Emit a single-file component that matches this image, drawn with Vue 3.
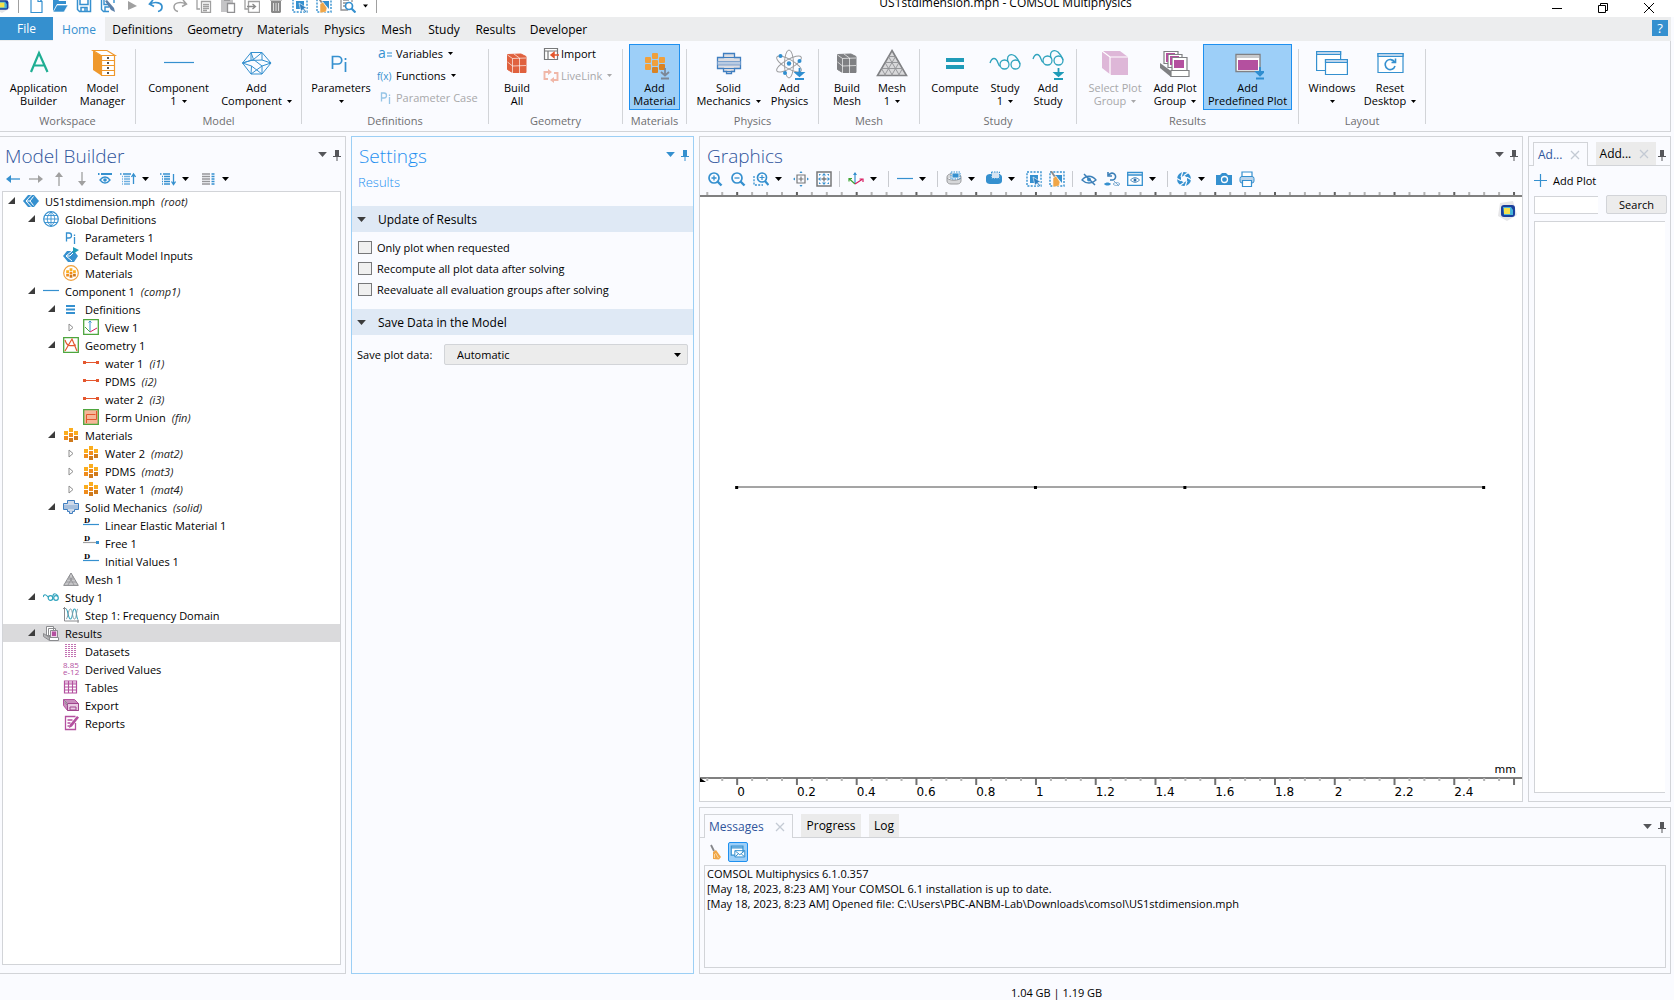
<script setup>
import { ref } from 'vue'

const quickIcons = ['new', 'open', 'save', 'saveas', 'play', 'undo', 'redo', 'copy', 'paste', 'duplicate', 'trash', 'select', 'clear', 'preview']

const menus = [
  { label: 'Home', w: 52, active: true },
  { label: 'Definitions', w: 75 },
  { label: 'Geometry', w: 70 },
  { label: 'Materials', w: 66 },
  { label: 'Physics', w: 57 },
  { label: 'Mesh', w: 47 },
  { label: 'Study', w: 48 },
  { label: 'Results', w: 55 },
  { label: 'Developer', w: 71 },
]

const ribbon = [
  { label: 'Workspace', w: 135, items: [
    { icon: 'appbuilder', lines: ['Application', 'Builder'], w: 70 },
    { icon: 'manager', lines: ['Model', 'Manager'], w: 58 },
  ] },
  { label: 'Model', w: 165, items: [
    { icon: 'component', lines: ['Component', '1'], menu: true, w: 76 },
    { icon: 'addcomp', lines: ['Add', 'Component'], menu: true, w: 80 },
  ] },
  { label: 'Definitions', w: 186, items: [
    { icon: 'params', lines: ['Parameters', ''], menu: true, w: 68 },
  ], listW: 108, list: [
    { icon: 'variables', label: 'Variables', menu: true },
    { icon: 'functions', label: 'Functions', menu: true },
    { icon: 'paramcase', label: 'Parameter Case', disabled: true },
  ] },
  { label: 'Geometry', w: 133, items: [
    { icon: 'buildall', lines: ['Build', 'All'], w: 46 },
  ], listW: 77, list: [
    { icon: 'import', label: 'Import' },
    { icon: 'livelink', label: 'LiveLink', menu: true, disabled: true },
  ] },
  { label: 'Materials', w: 63, items: [
    { icon: 'addmat', lines: ['Add', 'Material'], w: 51, active: true },
  ] },
  { label: 'Physics', w: 131, items: [
    { icon: 'solid', lines: ['Solid', 'Mechanics'], menu: true, w: 74 },
    { icon: 'addphys', lines: ['Add', 'Physics'], w: 48 },
  ] },
  { label: 'Mesh', w: 100, items: [
    { icon: 'buildmesh', lines: ['Build', 'Mesh'], w: 46 },
    { icon: 'mesh', lines: ['Mesh', '1'], menu: true, w: 44 },
  ] },
  { label: 'Study', w: 156, items: [
    { icon: 'compute', lines: ['Compute', ''], w: 58 },
    { icon: 'study', lines: ['Study', '1'], menu: true, w: 42 },
    { icon: 'addstudy', lines: ['Add', 'Study'], w: 44 },
  ] },
  { label: 'Results', w: 221, items: [
    { icon: 'selplot', lines: ['Select Plot', 'Group'], menu: true, disabled: true, w: 64 },
    { icon: 'addplot', lines: ['Add Plot', 'Group'], menu: true, w: 56 },
    { icon: 'predef', lines: ['Add', 'Predefined Plot'], w: 89, active: true },
  ] },
  { label: 'Layout', w: 126, items: [
    { icon: 'windows', lines: ['Windows', ''], menu: true, w: 56 },
    { icon: 'reset', lines: ['Reset', 'Desktop'], menu: true, w: 60 },
  ] },
]

// Lettering that belongs to an icon
const serif = 'DejaVu Serif, serif'
const glyphs = {
  variables: [{ t: 'a', x: 0, y: 13, size: 14, color: '#3590cf' }],
  functions: [{ t: 'f(x)', x: -1, y: 13, size: 10, color: '#3590cf' }],
  dline: [{ t: 'D', x: 1, y: 6, size: 7, color: '#000', font: serif, bold: true }],
  dpoint: [{ t: 'D', x: 1, y: 6, size: 7, color: '#000', font: serif, bold: true }],
  derived: [
    { t: '8.85', x: 0, y: 7, size: 8, color: '#b4509f' },
    { t: 'e-12', x: 0, y: 14, size: 8, color: '#b4509f' },
  ],
}

const builderTools = ['left', 'right', 'up', 'down', 'show', 'listup', 'v', 'listdown', 'v', 'columns', 'v']
const graphicsTools = [
  'zoomin', 'zoomout', 'zoombox', 'v', 'center', 'extents', '|', 'axes', 'v', '|', 'line', 'v', '|',
  'cylgrey', 'v', 'cylblue', 'v', 'select', 'clear', '|', 'hide', 'resethide', 'viewhide', 'v', '|',
  'shutter', 'v', 'camera', 'printer',
]

const tree = [
  { lv: 0, s: 'open', icon: 'root', t: 'US1stdimension.mph', tag: 'root' },
  { lv: 1, s: 'open', icon: 'globe', t: 'Global Definitions' },
  { lv: 2, icon: 'pi', t: 'Parameters 1' },
  { lv: 2, icon: 'inputs', t: 'Default Model Inputs' },
  { lv: 2, icon: 'matround', t: 'Materials' },
  { lv: 1, s: 'open', icon: 'line', t: 'Component 1', tag: 'comp1' },
  { lv: 2, s: 'open', icon: 'defs', t: 'Definitions' },
  { lv: 3, s: 'shut', icon: 'view', t: 'View 1' },
  { lv: 2, s: 'open', icon: 'geom', t: 'Geometry 1' },
  { lv: 3, icon: 'interval', t: 'water 1', tag: 'i1' },
  { lv: 3, icon: 'interval', t: 'PDMS', tag: 'i2' },
  { lv: 3, icon: 'interval', t: 'water 2', tag: 'i3' },
  { lv: 3, icon: 'union', t: 'Form Union', tag: 'fin' },
  { lv: 2, s: 'open', icon: 'mat', t: 'Materials' },
  { lv: 3, s: 'shut', icon: 'mat', t: 'Water 2', tag: 'mat2' },
  { lv: 3, s: 'shut', icon: 'mat', t: 'PDMS', tag: 'mat3' },
  { lv: 3, s: 'shut', icon: 'mat', t: 'Water 1', tag: 'mat4' },
  { lv: 2, s: 'open', icon: 'solidsm', t: 'Solid Mechanics', tag: 'solid' },
  { lv: 3, icon: 'dline', t: 'Linear Elastic Material 1' },
  { lv: 3, icon: 'dpoint', t: 'Free 1' },
  { lv: 3, icon: 'dline', t: 'Initial Values 1' },
  { lv: 2, icon: 'meshsm', t: 'Mesh 1' },
  { lv: 1, s: 'open', icon: 'studysm', t: 'Study 1' },
  { lv: 2, icon: 'freq', t: 'Step 1: Frequency Domain' },
  { lv: 1, s: 'open', icon: 'results', t: 'Results', sel: true },
  { lv: 2, icon: 'datasets', t: 'Datasets' },
  { lv: 2, icon: 'derived', t: 'Derived Values' },
  { lv: 2, icon: 'tables', t: 'Tables' },
  { lv: 2, icon: 'export', t: 'Export' },
  { lv: 2, icon: 'reports', t: 'Reports' },
]

const options = [
  { id: 'only', label: 'Only plot when requested' },
  { id: 'recompute', label: 'Recompute all plot data after solving' },
  { id: 'reevaluate', label: 'Reevaluate all evaluation groups after solving' },
]
const savePlot = ref('Automatic')

// Model coordinate (mm) to horizontal position in the view
const pos = (v) => (4.4 + v * 36.35).toFixed(3) + '%'
const ticks = Array.from({ length: 55 }, (_, i) => {
  const n = i - 2
  return { x: pos(n * 0.05), major: n % 4 === 0 }
})
const labels = Array.from({ length: 13 }, (_, i) => ({ x: pos(i * 0.2), t: String(Math.round(i * 2) / 10) }))
const points = [0, 1, 1.5, 2.5].map(pos)

const log = [
  'COMSOL Multiphysics 6.1.0.357',
  '[May 18, 2023, 8:23 AM] Your COMSOL 6.1 installation is up to date.',
  '[May 18, 2023, 8:23 AM] Opened file: C:\\Users\\PBC-ANBM-Lab\\Downloads\\comsol\\US1stdimension.mph',
]
</script>

<template>
  <svg class="defs" aria-hidden="true">
    <!-- shared marks -->
    <symbol id="i-caret" viewBox="0 0 7 4"><path d="M0 0h7L3.500 4z" fill="currentColor" /></symbol>
    <symbol id="i-pin" viewBox="0 0 8 11"><path d="M2 0h4v6h2v1H4.500v4h-1V7H0V6h2z" fill="currentColor" /></symbol>
    <symbol id="i-x" viewBox="0 0 10 10"><path d="M1 1l8 8M9 1L1 9" stroke="currentColor" stroke-width="1.300" fill="none" /></symbol>
    <symbol id="i-logo" viewBox="0 0 20 20">
      <path d="M3 2l13-2 4 14-10 6-9-5z" fill="#e6e6e8" />
      <rect x="4" y="4" width="14" height="12" rx="3" fill="#1b3f9c" /><path d="M6 6h8l2 3v5H7z" fill="#49b5d8" /><path d="M7 7h6v6H7z" fill="#f6e04a" />
    </symbol>
    <!-- quick access toolbar -->
    <symbol id="i-new" viewBox="0 0 16 16"><path d="M3 0.500h7l4 4v11H3zM10 0.500v4h4" fill="#fff" stroke="#3590cf" stroke-width="1.200" /></symbol>
    <symbol id="i-open" viewBox="0 0 16 16"><path d="M1 15V2h5l1 2h7v3H5z" fill="#3590cf" /><path d="M1 15l4-7h11l-4 7z" fill="#3590cf" stroke="#fff" stroke-width=".6" /></symbol>
    <symbol id="i-save" viewBox="0 0 16 16"><path d="M1.500 1.500h13v13h-11l-2-2zM4 1.500v6h8v-6M5 14.500v-4h6v4M9 11v3" fill="none" stroke="#3590cf" stroke-width="1.500" /></symbol>
    <symbol id="i-saveas" viewBox="0 0 16 16"><path d="M14 6V1.500H1.500v11l2 2H9M4 1.500v6h6M5 14v-4h4" fill="none" stroke="#3590cf" stroke-width="1.400" /><path d="M5 4l2-1 7 8 1 4-4-2z" fill="#5a7fa8" /></symbol>
    <symbol id="i-play" viewBox="0 0 16 16"><path d="M4 4l9 5-9 4z" fill="#a0a0a0" /></symbol>
    <symbol id="i-undo" viewBox="0 0 16 16"><path d="M5 3L1.500 7 6 9.500M2 7c6-3 12-1 12 3 0 3-2 4-4 4.500" fill="none" stroke="#3590cf" stroke-width="1.700" /></symbol>
    <symbol id="i-redo" viewBox="0 0 16 16"><path d="M11 3l3.500 4L10 9.500M14 7C8 4 2 6 2 10c0 3 2 4 4 4.500" fill="none" stroke="#a0a0a0" stroke-width="1.500" /></symbol>
    <symbol id="i-copy" viewBox="0 0 16 16"><path d="M4 12H1V1h8v2M5.500 4.500h9v11h-9zM7 7.500h6M7 9.500h6M7 11.500h6M7 13.500h4" fill="none" stroke="#a0a0a0" stroke-width="1.300" /></symbol>
    <symbol id="i-paste" viewBox="0 0 16 16"><path d="M1 1h12v14H1z" fill="#c4c4c6" /><path d="M7.500 6.500h7v9h-7zM4 3h6" fill="#fff" stroke="#909092" stroke-width="1.300" /></symbol>
    <symbol id="i-duplicate" viewBox="0 0 16 16"><path d="M4 12H1V1h9v2M4.500 4.500h11v11h-11z" fill="none" stroke="#a0a0a0" stroke-width="1.300" /><path d="M3 9.500h8M8.500 7l3 2.500-3 2.500" fill="none" stroke="#8a8a8a" stroke-width="1.300" /></symbol>
    <symbol id="i-trash" viewBox="0 0 16 16"><path d="M3 4h10v11l-1 1H4l-1-1zM2 2h12v1.500H2z" fill="#8a8a8a" /><path d="M5.500 6v8M8 6v8M10.500 6v8" stroke="#ddd" /></symbol>
    <symbol id="i-select" viewBox="0 0 16 16"><path d="M1 1h14v14H1z" fill="none" stroke="#3590cf" stroke-width="1.400" stroke-dasharray="2 1.300" /><path d="M4 4h8v8H4z" fill="#3590cf" /><path d="M7 6l8 5-3 .5 3 3.500-1 1-3-3.500-2 2z" fill="#2f7fc0" stroke="#fff" stroke-width=".6" /></symbol>
    <symbol id="i-clear" viewBox="0 0 16 16"><path d="M1 1h14v14H1z" fill="none" stroke="#3590cf" stroke-width="1.400" stroke-dasharray="2 1.300" /><path d="M6 4h7v8z" fill="#3590cf" /><path d="M2 0l4 6" stroke="#8a8a8a" stroke-width="1.800" /><path d="M4 7l3-2 4 6-1 4-6 1z" fill="#f0a648" stroke="#fff" stroke-width=".5" /></symbol>
    <symbol id="i-preview" viewBox="0 0 16 16"><path d="M8 13H1V0h11v5M3 3h6M3 6h4M3 9h3" fill="none" stroke="#909092" stroke-width="1.300" /><circle cx="9" cy="9" r="3.500" fill="#fff" stroke="#3590cf" stroke-width="1.700" /><path d="M11.500 11.500l4 4" stroke="#3590cf" stroke-width="2.200" /></symbol>
    <!-- ribbon, large -->
    <symbol id="i-appbuilder" viewBox="0 0 32 32"><path d="M8 24L16 5l8.500 19M10.500 17.500h11" fill="none" stroke="#1fae93" stroke-width="2.200" /></symbol>
    <symbol id="i-manager" viewBox="0 0 32 32"><path d="M6 3l9 5v20L6 22z" fill="#ef982c" /><path d="M6 2.500h14l8 5H14z" fill="#fff" stroke="#ef982c" stroke-width="1.200" /><path d="M14.500 7.500h13v20h-13zM14.500 12.500h13M14.500 17.500h13M14.500 22.500h13" fill="#fff" stroke="#ef982c" stroke-width="1.200" /><path d="M20 10h2M20 15h2M20 20h2M20 25h2" stroke="#555" stroke-width="2" /></symbol>
    <symbol id="i-component" viewBox="0 0 32 32"><path d="M1 14.500h30" stroke="#3590cf" stroke-width="1.200" /></symbol>
    <symbol id="i-addcomp" viewBox="0 0 32 32"><path d="M1.500 15L10 4.500h11L30 15 21 26H10zM1.500 15l11-3.500L21 4.500M12.500 11.500L21 18v8M21 18l9-3M10 4.500l2.500 7M10 26l11-8M10 4.500v8l-8.500 2.500M10 12.500l11-.5 9 3M10 26l.5-8L1.500 15M21 12V4.500M10.500 18l10.500 8" fill="none" stroke="#3590cf" /></symbol>
    <symbol id="i-params" viewBox="0 0 32 32"><path d="M7.500 21V8.500H13a3.500 3.500 0 010 7.500H8" fill="none" stroke="#3590cf" stroke-width="1.700" /><path d="M20.500 14v10M20.500 10v2" stroke="#3590cf" stroke-width="1.700" /></symbol>
    <symbol id="i-cube" viewBox="0 0 32 32"><path d="M6.500 6.500L20 6l5 2.500v16H11.500l-5-3z" fill="currentColor" stroke="currentColor" /><path d="M6.500 7l5 3.500L25 10M11.500 10.500V25M6.500 14l5 4L25 17.500M18.500 10v15M13 6l5.500 4" fill="none" stroke="#fff" stroke-opacity=".65" /></symbol>
    <symbol id="i-buildall" viewBox="0 0 32 32"><use href="#i-cube" color="#e0613e" /></symbol>
    <symbol id="i-buildmesh" viewBox="0 0 32 32"><use href="#i-cube" color="#7f8083" /></symbol>
    <symbol id="i-addmat" viewBox="0 0 32 32"><g fill="#f0a03c"><rect x="13" y="5" width="6" height="6" rx="1" /><rect x="6" y="9" width="6" height="6" rx="1" /><rect x="20" y="9" width="6" height="6" rx="1" /><rect x="13" y="12" width="6" height="6" rx="1" /><rect x="6" y="16" width="6" height="6" rx="1" /></g><g fill="#d98324"><rect x="13" y="19" width="6" height="6" rx="1" /><rect x="20" y="16" width="6" height="6" rx="1" /></g><path d="M26 20v7M22 24l4 3.500 4-3.500M22 30.500h8" fill="none" stroke="#7d8896" stroke-width="1.800" /></symbol>
    <symbol id="i-solid" viewBox="0 0 32 32"><path d="M10.500 5.500h11v4h6v11h-6v3h-3v2h-5v-2h-3v-3h-6v-11h6z" fill="#dcdde2" stroke="#3f7ec0" stroke-width="1.300" /><path d="M10 9.500h12M10 20.500h12M13 23.500h6" stroke="#3f7ec0" /><path d="M4.500 13.500h23v3.500h-23z" fill="#b9cbe2" stroke="#6a96c8" stroke-width=".8" /></symbol>
    <symbol id="i-addphys" viewBox="0 0 32 32"><g fill="none" stroke="#9c9da0"><ellipse cx="15" cy="16" rx="4.500" ry="14" /><ellipse cx="15" cy="16" rx="4.500" ry="14" transform="rotate(60 15 16)" /><ellipse cx="15" cy="16" rx="4.500" ry="14" transform="rotate(-60 15 16)" /></g><g fill="#2f8ed0"><circle cx="15" cy="15.500" r="2.200" /><circle cx="6.500" cy="8" r="2" /><circle cx="25.500" cy="13" r="2" /><circle cx="11" cy="25" r="2" /></g><path d="M25.500 20v7M22 25l3.500 3 3.500-3zM21 31h9" fill="#2f8ed0" stroke="#2f8ed0" stroke-width="1.800" /></symbol>
    <symbol id="i-mesh" viewBox="0 0 32 32"><path d="M16 2.500L30.500 27.500h-29z" fill="#d8d8da" stroke="#808184" stroke-width="1.600" /><path d="M12.500 8.500h7M9 14.500h14M5.500 20.500h21M12.500 8.500l11 19M9 14.500l7.500 13M5.500 20.500l4 7M19.500 8.500l-11 19M23 14.500l-7.500 13M26.500 20.500l-4 7" stroke="#909194" fill="none" stroke-width=".9" /></symbol>
    <symbol id="i-compute" viewBox="0 0 32 32"><path d="M7 12h18M7 19h18" stroke="#1f9bb8" stroke-width="4" /></symbol>
    <symbol id="i-study" viewBox="0 0 32 32"><path d="M1 15c2-6 6-6 8 0 1 3 2 3 2 3M19 14c-2-7 3-9 7-6 4 4 4 6 5 8" fill="none" stroke="#2fa3bd" stroke-width="1.300" /><circle cx="15.500" cy="16.500" r="4.500" fill="none" stroke="#2fa3bd" stroke-width="1.300" /><circle cx="26.500" cy="16.500" r="4.500" fill="none" stroke="#2fa3bd" stroke-width="1.300" /></symbol>
    <symbol id="i-addstudy" viewBox="0 0 32 32"><use href="#i-study" x="0" y="-4" width="32" height="32" /><path d="M26.500 20v7M23 25l3.500 3 3.500-3zM22 31h9" fill="#1f9bb8" stroke="#1f9bb8" stroke-width="1.800" /></symbol>
    <symbol id="i-selplot" viewBox="0 0 32 32"><path d="M3 3h18l8 6v18H12l-9-7z" fill="#deb7d8" /><path d="M3 3l8 6h18M11 9v18" fill="none" stroke="#fff" stroke-width="1.200" /></symbol>
    <symbol id="i-addplot" viewBox="0 0 32 32"><path d="M1 15l11 8v6L1 20z" fill="#7f8083" /><g stroke="#7f8083" stroke-width="1.200"><path d="M5 3.500h14v12H5z" fill="#fff" /><path d="M9 6.500h14v13H9z" fill="#fff" /><path d="M13 9.500h15v14H13z" fill="#fff" /><path d="M12 22.500h18v6H12z" fill="#fff" /></g><path d="M7 6h2v8H7zM7 5h9v1H7zM11 9h2v8h-2zM11 8h9v1h-9zM15 12h10v8H15z" fill="#b4509f" /></symbol>
    <symbol id="i-predef" viewBox="0 0 32 32"><path d="M4 6.500h24v17H4z" fill="#fff" stroke="#808184" stroke-width="1.400" /><path d="M5 7h22v3H5z" fill="#c9cacc" /><path d="M6 12h20v10H6z" fill="#b4509f" /><path d="M28 19v7M24.500 24l3.500 3.500 3.500-3.500zM24 30.500h8" fill="#2f8ed0" stroke="#2f8ed0" stroke-width="1.800" /></symbol>
    <symbol id="i-windows" viewBox="0 0 32 32"><g stroke="#3590cf" stroke-width="1.200"><path d="M.6 3.500h24v19H.6z" fill="#fff" /><path d="M.6 3.500h24v3H.6z" fill="#bcd5ec" /><path d="M9.500 11.500h21.900v15H9.500z" fill="#fff" /><path d="M9.500 11.500h21.900v3H9.500z" fill="#bcd5ec" /></g></symbol>
    <symbol id="i-reset" viewBox="0 0 32 32"><g stroke="#3590cf" stroke-width="1.200"><path d="M4 5.500h25v19H4z" fill="#fff" /><path d="M4 5.500h25v3H4z" fill="#bcd5ec" /><path d="M20.500 14a5 5 0 10.500 4M21.500 10.500v4h-4" fill="none" stroke-width="1.600" /></g></symbol>
    <!-- ribbon, small -->
    <symbol id="i-variables" viewBox="0 0 16 16"><path d="M9 8h5M9 11h5" stroke="#3590cf" stroke-width="1.200" /></symbol>
    <symbol id="i-functions" viewBox="0 0 16 16"></symbol>
    <symbol id="i-pi" viewBox="0 0 16 16"><path d="M3.500 12.500V4H6a2.200 2.200 0 010 5H4M11.500 8v7M11.500 5.500V7" fill="none" stroke="#3590cf" stroke-width="1.300" /></symbol>
    <symbol id="i-paramcase" viewBox="0 0 16 16"><use href="#i-pi" opacity=".5" /></symbol>
    <symbol id="i-import" viewBox="0 0 16 16"><path d="M1.500 3.500h13v11h-13zM1.500 6h13M5 6v8" fill="#fff" stroke="#77787a" stroke-width="1.200" /><path d="M16 10H8M11 7.500L8 10l3 2.500z" fill="#e4572e" stroke="#e4572e" stroke-width="1.500" /></symbol>
    <symbol id="i-livelink" viewBox="0 0 16 16"><path d="M6 5H1.500v7H5M10 13h4.500V6H11" fill="none" stroke="#f0b7a8" stroke-width="1.900" /><path d="M5 2l4 3-4 3zM11 10l-4 3 4 3z" fill="#f0b7a8" /></symbol>
    <!-- panel toolbars -->
    <symbol id="i-left" viewBox="0 0 16 16"><path d="M3 8h12" stroke="#3590cf" stroke-width="1.300" /><path d="M1 8l5-4v8z" fill="#3590cf" /></symbol>
    <symbol id="i-right" viewBox="0 0 16 16"><path d="M1 8h12" stroke="#a0a0a0" stroke-width="1.300" /><path d="M15 8l-5-4v8z" fill="#a0a0a0" /></symbol>
    <symbol id="i-up" viewBox="0 0 16 16"><path d="M8 3v12" stroke="#a0a0a0" stroke-width="1.300" /><path d="M8 1L4 6h8z" fill="#a0a0a0" /></symbol>
    <symbol id="i-down" viewBox="0 0 16 16"><path d="M8 1v12" stroke="#a0a0a0" stroke-width="1.300" /><path d="M8 15l-4-5h8z" fill="#a0a0a0" /></symbol>
    <symbol id="i-show" viewBox="0 0 16 16"><path d="M1 3h1.500M4 3h11" stroke="#3590cf" stroke-width="2" /><path d="M3 9c3-4 7-4 10 0-3 4-7 4-10 0z" fill="none" stroke="#3590cf" stroke-width="1.300" /><circle cx="8" cy="9" r="1.800" fill="#3590cf" /></symbol>
    <symbol id="i-listup" viewBox="0 0 16 16"><path d="M0 3h1.500M3 3h8" stroke="#3590cf" stroke-width="1.500" /><path d="M2 5.500h1M4 5.500h6M2 8h1M4 8h6M2 10.500h1M4 10.500h6M2 13h1M4 13h6" stroke="#6fb0e0" stroke-width="1.300" /><path d="M13.500 4v9M11.500 6l2-3 2 3" fill="none" stroke="#3590cf" stroke-width="1.300" /></symbol>
    <symbol id="i-listdown" viewBox="0 0 16 16"><path d="M0 3h1.500M3 3h7M2 5.500h1M4 5.500h6M2 8h1M4 8h6M2 10.500h1M4 10.500h6M2 13h1M4 13h6" stroke="#3590cf" stroke-width="1.400" /><path d="M13.500 3v10M11.500 10.500l2 3 2-3" fill="none" stroke="#3590cf" stroke-width="1.300" /></symbol>
    <symbol id="i-columns" viewBox="0 0 16 16"><path d="M2 3h8M2 5.500h8M2 8h8M2 10.500h8M2 13h8" stroke="#96979a" stroke-width="1.500" /><path d="M11.500 3h3M11.500 5.500h3M11.500 8h3M11.500 10.500h3M11.500 13h3" stroke="#3590cf" stroke-width="1.500" /></symbol>
    <symbol id="i-zoomin" viewBox="0 0 16 16"><circle cx="7" cy="7" r="5" fill="none" stroke="#3590cf" stroke-width="1.700" /><path d="M10.500 10.500l4 4" stroke="#3590cf" stroke-width="2.400" /><path d="M4.500 7h5M7 4.500v5" stroke="#3590cf" stroke-width="1.300" /></symbol>
    <symbol id="i-zoomout" viewBox="0 0 16 16"><circle cx="7" cy="7" r="5" fill="none" stroke="#3590cf" stroke-width="1.700" /><path d="M10.500 10.500l4 4" stroke="#3590cf" stroke-width="2.400" /><path d="M4.500 7h5" stroke="#3590cf" stroke-width="1.300" /></symbol>
    <symbol id="i-zoombox" viewBox="0 0 16 16"><path d="M1 5v9h9" fill="none" stroke="#3590cf" stroke-width="1.300" stroke-dasharray="2 1.300" /><circle cx="9" cy="6.500" r="4.500" fill="#fafbff" stroke="#3590cf" stroke-width="1.700" /><path d="M12 10l3.500 4" stroke="#3590cf" stroke-width="2.200" /><path d="M6.500 6.500h5M9 4v5" stroke="#3590cf" stroke-width="1.200" /></symbol>
    <symbol id="i-center" viewBox="0 0 16 16"><path d="M4 4h8v8H4zM5.500 8h5M8 5.500v5" fill="none" stroke="#77787a" stroke-width="1.200" /><path d="M8 0l1.500 2h-3zM8 16l1.500-2h-3zM0 8l2-1.500v3zM16 8l-2-1.500v3z" fill="#3590cf" /></symbol>
    <symbol id="i-extents" viewBox="0 0 16 16"><path d="M1 1h14v14H1z" fill="none" stroke="#77787a" stroke-width="1.500" /><path d="M5.500 8h5M8 5.500v5" stroke="#77787a" stroke-width="1.300" /><path d="M8 2l2 2.500H6zM8 14l2-2.500H6zM2 8l2.500-2v4zM14 8l-2.500-2v4zM3 3h2L3 5zM13 3h-2l2 2zM3 13h2l-2-2zM13 13h-2l2-2z" fill="#3590cf" /></symbol>
    <symbol id="i-axes" viewBox="0 0 16 16"><path d="M7 13V2" stroke="#3590cf" stroke-width="1.200" /><path d="M7 1L5 4h4z" fill="#3590cf" /><path d="M7 13L1.500 8M1 10.500V7.500h3" fill="none" stroke="#3fa535" stroke-width="1.200" /><path d="M7 13l7-4.500M11.500 8H15v3" fill="none" stroke="#d81b60" stroke-width="1.200" /></symbol>
    <symbol id="i-line" viewBox="0 0 16 16"><path d="M0 7.500h16" stroke="#3590cf" stroke-width="1.200" /></symbol>
    <symbol id="i-cylgrey" viewBox="0 0 16 16"><path d="M1 6c0-2 2-3 4-3h6c2 0 4 1 4 3v4c0 2-2 3-4 3H5c-2 0-4-1-4-3zM1 7c3 3 11 3 14 0" fill="#d6d7d9" stroke="#9a9b9e" stroke-width="1" /><path d="M6 2h7v5H6z" fill="#3590cf" stroke="#fff" stroke-width=".8" /><path d="M5 1h9v7H5z" fill="none" stroke="#3590cf" stroke-dasharray="1.500 1" /></symbol>
    <symbol id="i-cylblue" viewBox="0 0 16 16"><path d="M0 6c0-2 2-3 4-3h8c2 0 4 1 4 3v4c0 2-2 3-4 3H4c-2 0-4-1-4-3z" fill="#3590cf" /><path d="M5.500 1h8v6.500h-8z" fill="#d6e4f2" /><path d="M5.500 1h8v6.500h-8z" fill="none" stroke="#3590cf" stroke-dasharray="1.500 1" /></symbol>
    <symbol id="i-hide" viewBox="0 0 16 16"><path d="M1 9c4-5 10-5 14 0-4 4-10 4-14 0z" fill="none" stroke="#3b7fb8" stroke-width="1.300" /><circle cx="8" cy="8.500" r="2" fill="#3590cf" /><path d="M3 3l11 11" stroke="#3b7fb8" stroke-width="1.500" /></symbol>
    <symbol id="i-resethide" viewBox="0 0 16 16"><path d="M5 4a3.500 3.500 0 114 5H6M4 1v4h4" fill="none" stroke="#3b7fb8" stroke-width="1.600" /><path d="M0 13c2-2 5-2 7 0-2 2-5 2-7 0z" fill="#3590cf" /><path d="M9 13c2-2 5-2 7 0-2 2-5 2-7 0zM10 10l5 5" fill="none" stroke="#7aa9d0" /></symbol>
    <symbol id="i-viewhide" viewBox="0 0 16 16"><path d="M.7 1.500h14.600v12.800H.7zM1 4h14" fill="#fff" stroke="#3590cf" stroke-width="1.300" /><path d="M3.500 9c3-3 6-3 9 0-3 3-6 3-9 0z" fill="#fff" stroke="#3b7fb8" /><circle cx="8" cy="9" r="1.500" fill="#2f6fa8" /></symbol>
    <symbol id="i-shutter" viewBox="0 0 16 16"><circle cx="8" cy="8" r="7" fill="#3590cf" /><path d="M8 4.500l3 1.700v3.600L8 11.500 5 9.800V6.200z" fill="#fafbff" /><path d="M8 4.500L13 1M11 6.200l5 3M11 9.800L9 16M8 11.500L3 15M5 9.800L0 7M5 6.200L7 0" stroke="#fafbff" stroke-width="1.200" /></symbol>
    <symbol id="i-camera" viewBox="0 0 16 16"><path d="M0 4h4l2-2h4l2 2h4v10H0z" fill="#3590cf" /><circle cx="8.500" cy="8.500" r="3" fill="none" stroke="#fff" stroke-width="1.300" /></symbol>
    <symbol id="i-printer" viewBox="0 0 16 16"><path d="M3 1h10v5H3z" fill="#fff" stroke="#3590cf" stroke-width="1.200" /><rect x="1" y="5.500" width="14" height="6.500" rx="2" fill="#bcd5ec" stroke="#3590cf" /><path d="M3.500 9.500h9v6h-9z" fill="#fff" stroke="#3590cf" stroke-width="1.200" /></symbol>
    <symbol id="i-broom" viewBox="0 0 16 16"><path d="M3 1l3 6" stroke="#85868a" stroke-width="1.800" /><path d="M5 8l3-2 5 7-2 2.500-6-.5z" fill="#f0a648" /><path d="M7.500 9l3 5M6.500 10v4" stroke="#fbd9a4" /></symbol>
    <symbol id="i-msgs" viewBox="0 0 20 20"><path d="M2.500 3.500h13v10h-13zM2.500 5.500h13" fill="#fff" stroke="#3590cf" stroke-width="1.300" /><path d="M6.500 8.500h11v7h-11zM7 9l5 4 5-4M7 15l3.500-3M17 15l-3.500-3" fill="#fff" stroke="#3590cf" stroke-width="1.100" /></symbol>
    <!-- model tree -->
    <symbol id="i-root" viewBox="0 0 16 16"><path d="M0 8l5-6h6l5 6-5 6H5z" fill="#3590cf" /><path d="M8.500 2L3 8l5.500 6M3 8h4M10.500 3.500L7 8l3.500 4.500" fill="none" stroke="#fff" /></symbol>
    <symbol id="i-globe" viewBox="0 0 16 16"><circle cx="8" cy="8" r="7.300" fill="#fff" stroke="#3590cf" stroke-width="1.200" /><path d="M8 1v14M1 8h14M2 4.500h12M2 11.500h12M8 1c-5 4-5 10 0 14M8 1c5 4 5 10 0 14" fill="none" stroke="#3590cf" stroke-width=".9" /></symbol>
    <symbol id="i-inputs" viewBox="0 0 16 16"><path d="M0 9l4-5h7l4 5-4 6H5z" fill="#3590cf" /><path d="M9 4L3 9l6 5M3 9h4l4-4" fill="none" stroke="#fff" /><path d="M10 0l6 3-6 4z" fill="#1f9bb8" /></symbol>
    <symbol id="i-mat" viewBox="0 0 16 16"><g fill="#fbad1e"><path d="M6 1h4v4H6zM1 4h4v4H1zM11 4h4v4h-4z" /></g><g fill="#f08c1c"><path d="M1 9h4v4H1zM6 6h4v4H6z" /></g><path d="M6 11h4v4H6zM11 9h4v4h-4z" fill="#cf7a1c" /></symbol>
    <symbol id="i-matround" viewBox="0 0 16 16"><circle cx="8" cy="8" r="7.300" fill="#fff" stroke="#f0a03c" stroke-width="1.200" /><use href="#i-mat" x="2.500" y="2.500" width="11" height="11" /></symbol>
    <symbol id="i-defs" viewBox="0 0 16 16"><path d="M3 5h9M3 8.500h9M3 12h9" stroke="#3590cf" stroke-width="2" /></symbol>
    <symbol id="i-view" viewBox="0 0 16 16"><path d="M.7.7h14.600v14.600H.7z" fill="#fff" stroke="#4ea63e" stroke-width="1.300" /><path d="M7 12V2M5.500 3.500L7 2l1.500 1.500" fill="none" stroke="#3590cf" /><path d="M7 13L2 8" stroke="#4ea63e" /><path d="M7 13l7-4" stroke="#d81b60" /></symbol>
    <symbol id="i-geom" viewBox="0 0 16 16"><path d="M.7.7h14.600v14.600H.7z" fill="#fff" stroke="#4ea63e" stroke-width="1.300" /><path d="M2 14L9 2l5 12M2 3c2 7 6 6 11 5" fill="none" stroke="#e4572e" stroke-width="1.200" /></symbol>
    <symbol id="i-interval" viewBox="0 0 16 16"><path d="M1 7.500h14" stroke="#e4572e" /><path d="M0 6h3v3H0zM13 6h3v3h-3z" fill="#e4572e" /></symbol>
    <symbol id="i-union" viewBox="0 0 16 16"><path d="M.7.7h14.600v14.600H.7z" fill="#f6b698" stroke="#4ea63e" stroke-width="1.300" /><path d="M3.500 14V5.500h9M3 10.500h10.500V2" fill="none" stroke="#e4572e" /></symbol>
    <symbol id="i-solidsm" viewBox="0 0 16 16"><path d="M4.500 1.500h7v3h4v6h-4v2h-2v2h-3v-2h-2v-2h-4v-6h4z" fill="#cfdaea" stroke="#3f7ec0" /><path d="M1 7h14M1 9h14" stroke="#7fa5d0" /></symbol>
    <symbol id="i-dline" viewBox="0 0 16 16"><path d="M0 7.500h16" stroke="#3590cf" stroke-width="1.200" /></symbol>
    <symbol id="i-dpoint" viewBox="0 0 16 16"><path d="M0 7.500h13" stroke="#a0a0a0" stroke-width="1.200" /><path d="M13 6h3v3h-3z" fill="#3590cf" /></symbol>
    <symbol id="i-meshsm" viewBox="0 0 16 16"><path d="M8 2l7.300 12.400H.7z" fill="#c8c8ca" stroke="#8a8b8e" /><path d="M5 8h6M3 11h10M6 5l5 9M10 5l-5 9" stroke="#909194" stroke-width=".8" /></symbol>
    <symbol id="i-studysm" viewBox="0 0 16 16"><path d="M0 8c1-3 3-3 5 0M10 7c0-3 3-3 5 0" fill="none" stroke="#2fa3bd" stroke-width="1.200" /><circle cx="7.500" cy="9" r="2.300" fill="none" stroke="#2fa3bd" stroke-width="1.200" /><circle cx="13" cy="9" r="2.300" fill="none" stroke="#2fa3bd" stroke-width="1.200" /></symbol>
    <symbol id="i-freq" viewBox="0 0 16 16"><path d="M1.500 0v14H16M0 1.500h3M15 12.500V16" fill="none" stroke="#8a8b8e" /><path d="M3 2c2 0 2 10 4.500 10S9 2 11.500 2 13 12 15 12" fill="none" stroke="#2fa3bd" stroke-width="1.100" /><path d="M3 12C5 12 5 2 7.500 2S9 12 11.500 12 13 2 15 2" fill="none" stroke="#7f9aa5" /></symbol>
    <symbol id="i-results" viewBox="0 0 16 16"><path d="M3.500 1.500h7v9h-7zM5.500 3.500h7v8h-7z" fill="#fff" stroke="#8a8b8e" /><path d="M.5 8.500l6 4v3l-6-4z" fill="#b5b5b8" stroke="#8a8b8e" /><path d="M7.500 5.500h7v7h-7z" fill="#f1d4ea" stroke="#8a8b8e" /><path d="M9 6.500h4v4.500H9z" fill="#b4509f" /><path d="M6.500 12.500h9v3h-9z" fill="#fff" stroke="#8a8b8e" /></symbol>
    <symbol id="i-datasets" viewBox="0 0 16 16"><path d="M3 1v14M6 1v14M9 1v14M12 1v14" stroke="#b4509f" stroke-width="2" stroke-dasharray="1 1" opacity=".8" /></symbol>
    <symbol id="i-derived" viewBox="0 0 16 16"></symbol>
    <symbol id="i-tables" viewBox="0 0 16 16"><path d="M1.500 2h12v12h-12z" fill="#fff" stroke="#b4509f" stroke-width="1.200" /><path d="M2 2.500h11v2H2z" fill="#e3b7da" /><path d="M1.500 5h12M1.500 8h12M1.500 11h12M5.500 2v12M9.500 2v12" stroke="#b4509f" stroke-width="1.100" /></symbol>
    <symbol id="i-export" viewBox="0 0 16 16"><path d="M.5 2.500h11l4 4v7h-11l-4-5z" fill="#c98dbd" stroke="#b4509f" /><path d="M4.500 6.500h11v7h-11zM7 10h6v3H7z" fill="#e9cbe3" stroke="#a0458d" /><path d="M.5 2.500l4 4M2 5.500l2.500 3" stroke="#8a8b8e" /></symbol>
    <symbol id="i-reports" viewBox="0 0 16 16"><path d="M12.500 8v6.500H2.500v-13h10M4.500 5h5M4.500 8h3M4.500 11h2" fill="none" stroke="#b4509f" stroke-width="1.300" /><path d="M14 1l2 1.500-7 9-3 1.500.5-3z" fill="#b4509f" /></symbol>
  </svg>

  <div class="app">
    <header class="titlebar">
      <div class="quick">
        <svg class="applogo"><use href="#i-logo" /></svg>
        <span class="tsep"></span>
        <button v-for="n in quickIcons" :key="n" class="qbtn" type="button" :aria-label="n"><svg><use :href="'#i-' + n" /></svg></button>
        <svg class="caret"><use href="#i-caret" /></svg>
        <span class="tsep"></span>
      </div>
      <div class="apptitle">US1stdimension.mph - COMSOL Multiphysics</div>
      <div class="winctl">
        <button type="button" aria-label="Minimize"><svg viewBox="0 0 10 10"><path d="M0 5.500h10" stroke="#000" /></svg></button>
        <button type="button" aria-label="Restore"><svg viewBox="0 0 10 10"><path d="M.5 2.500h7v7h-7zM2.500 2V.5h7v7H8" fill="none" stroke="#000" /></svg></button>
        <button type="button" aria-label="Close"><svg viewBox="0 0 10 10"><path d="M0 0l10 10M10 0L0 10" stroke="#000" /></svg></button>
      </div>
    </header>

    <nav class="menubar">
      <button class="file" type="button">File</button>
      <button v-for="m in menus" :key="m.label" type="button" class="menu" :class="{ active: m.active }" :style="{ width: m.w + 'px' }">{{ m.label }}</button>
      <button class="help" type="button">?</button>
    </nav>

    <section class="ribbon">
      <template v-for="g in ribbon" :key="g.label">
        <div class="group" :style="{ width: g.w + 'px' }">
          <div class="gbody">
            <button v-for="b in g.items" :key="b.icon" type="button" class="big" :class="{ active: b.active, off: b.disabled }" :style="{ width: b.w + 'px' }">
              <svg class="bigicon"><use :href="'#i-' + b.icon" /></svg>
              <span>{{ b.lines[0] }}</span>
              <span class="l2">{{ b.lines[1] }}<svg v-if="b.menu" class="mini" :class="{ lone: !b.lines[1] }"><use href="#i-caret" /></svg></span>
            </button>
            <div v-if="g.list" class="list" :style="{ width: g.listW + 'px' }">
              <button v-for="s in g.list" :key="s.label" type="button" class="small" :class="{ off: s.disabled }">
                <svg class="ic" viewBox="0 0 16 16">
                  <use :href="'#i-' + s.icon" />
                  <text v-for="c in glyphs[s.icon]" :key="c.t" :x="c.x" :y="c.y" :font-size="c.size" :fill="c.color">{{ c.t }}</text>
                </svg>{{ s.label }}<svg v-if="s.menu" class="mini"><use href="#i-caret" /></svg>
              </button>
            </div>
          </div>
          <div class="glabel">{{ g.label }}</div>
        </div>
        <span class="gsep"></span>
      </template>
    </section>

    <main class="work">
      <section class="panel builder">
        <div class="head">
          <h2>Model Builder</h2>
          <svg class="hcaret"><use href="#i-caret" /></svg><svg class="pin"><use href="#i-pin" /></svg>
        </div>
        <div class="tools">
          <template v-for="(t, i) in builderTools" :key="i">
            <button v-if="t === 'v'" class="tcaret" type="button" aria-label="more"><svg><use href="#i-caret" /></svg></button>
            <button v-else class="tbtn" type="button" :aria-label="t"><svg><use :href="'#i-' + t" /></svg></button>
          </template>
        </div>
        <ul class="tree">
          <li v-for="(n, i) in tree" :key="i" :class="['lv' + n.lv, { sel: n.sel }]">
            <span class="twist">
              <svg v-if="n.s === 'open'" viewBox="0 0 7 7"><path d="M7 0v7H0z" fill="#3c3c3c" /></svg>
              <svg v-if="n.s === 'shut'" viewBox="0 0 6 9"><path d="M1 1l4 3.500-4 3.500z" fill="#fff" stroke="#8e8e8e" /></svg>
            </span>
            <svg class="ic" viewBox="0 0 16 16">
              <use :href="'#i-' + n.icon" />
              <text v-for="c in glyphs[n.icon]" :key="c.t" :x="c.x" :y="c.y" :font-size="c.size" :fill="c.color" :font-family="c.font" :font-weight="c.bold ? 700 : 400">{{ c.t }}</text>
            </svg>
            <span class="name">{{ n.t }}</span>
            <i v-if="n.tag">({{ n.tag }})</i>
          </li>
        </ul>
      </section>

      <section class="panel settings">
        <div class="head">
          <h2>Settings</h2>
          <svg class="hcaret"><use href="#i-caret" /></svg><svg class="pin"><use href="#i-pin" /></svg>
        </div>
        <div class="sub">Results</div>
        <h3><svg><use href="#i-caret" /></svg>Update of Results</h3>
        <div class="checks">
          <label v-for="o in options" :key="o.id" :for="o.id"><input :id="o.id" type="checkbox" />{{ o.label }}</label>
        </div>
        <h3><svg><use href="#i-caret" /></svg>Save Data in the Model</h3>
        <div class="field">
          <label for="save">Save plot data:</label>
          <div class="combo">
            <select id="save" v-model="savePlot"><option>Automatic</option><option>On</option><option>Off</option></select>
            <svg><use href="#i-caret" /></svg>
          </div>
        </div>
      </section>

      <div class="right">
        <div class="upper">
          <section class="panel graphics">
            <div class="head">
              <h2>Graphics</h2>
              <svg class="hcaret"><use href="#i-caret" /></svg><svg class="pin"><use href="#i-pin" /></svg>
            </div>
            <div class="tools">
              <template v-for="(t, i) in graphicsTools" :key="i">
                <span v-if="t === '|'" class="vsep"></span>
                <button v-else-if="t === 'v'" class="tcaret" type="button" aria-label="more"><svg><use href="#i-caret" /></svg></button>
                <button v-else class="tbtn" type="button" :aria-label="t"><svg><use :href="'#i-' + t" /></svg></button>
              </template>
            </div>
            <svg class="topruler">
              <rect v-for="(k, i) in ticks" :key="i" :x="k.x" y="0" width="2" height="4" :fill="k.major ? '#606060' : '#b4b4b4'" />
              <rect x="0" y="3" width="100%" height="2" fill="#808080" />
            </svg>
            <div class="scene">
              <svg class="model">
                <line :x1="points[0]" :x2="points[3]" y1="50%" y2="50%" stroke="#4a4a4a" />
                <svg v-for="p in points" :key="p" :x="p" y="50%" overflow="visible"><rect x="-1" y="-1" width="3" height="3" /></svg>
                <text x="100%" y="100%" dx="-6" dy="-4" text-anchor="end">mm</text>
              </svg>
              <svg class="badge"><use href="#i-logo" /></svg>
            </div>
            <svg class="ruler">
              <rect x="0" y="0" width="100%" height="2" fill="#808080" />
              <path d="M0 1l6 4H0z" />
              <rect v-for="(k, i) in ticks" :key="i" :x="k.x" y="1" width="2" :height="k.major ? 7 : 3" :fill="k.major ? '#707070' : '#b4b4b4'" />
              <text v-for="l in labels" :key="l.t" :x="l.x" y="19" dx="1">{{ l.t }}</text>
            </svg>
          </section>

          <section class="panel addplot">
            <div class="tabs">
              <button class="tab on" type="button">Ad...<svg><use href="#i-x" /></svg></button>
              <button class="tab" type="button">Add...<svg><use href="#i-x" /></svg></button>
              <svg class="pin"><use href="#i-pin" /></svg>
            </div>
            <button class="plus" type="button"><svg viewBox="0 0 13 13"><path d="M0 6.500h13M6.500 0v13" stroke="#3590cf" stroke-width="1.200" /></svg>Add Plot</button>
            <div class="search"><input type="text" aria-label="Search plots" /><button type="button">Search</button></div>
            <div class="plots"></div>
          </section>
        </div>

        <section class="panel messages">
          <div class="tabs">
            <button class="tab on" type="button">Messages<svg><use href="#i-x" /></svg></button>
            <button class="tab" type="button">Progress</button>
            <button class="tab" type="button">Log</button>
            <svg class="hcaret"><use href="#i-caret" /></svg><svg class="pin"><use href="#i-pin" /></svg>
          </div>
          <div class="mtools">
            <button class="broom" type="button" aria-label="Clear"><svg class="ic"><use href="#i-broom" /></svg></button>
            <button class="msgbtn" type="button" aria-label="Show messages"><svg><use href="#i-msgs" /></svg></button>
          </div>
          <div class="log"><p v-for="l in log" :key="l">{{ l }}</p></div>
        </section>
      </div>
    </main>

    <footer class="status">1.04 GB | 1.19 GB</footer>
  </div>
</template>

<style>
body { margin: 0; background: #fafbff; }
</style>

<style scoped>
* { box-sizing: border-box; }
.app { font-family: "Open Sans", "Noto Sans", sans-serif; font-size: 11px; }
.defs { position: absolute; width: 0; height: 0; }
.app { height: 100vh; display: flex; flex-direction: column; color: #000; background: #fafbff; overflow: hidden; }
svg { display: block; flex: none; }
button { font: inherit; color: inherit; background: none; border: 0; padding: 0; white-space: nowrap; }
h2, h3, p, ul { margin: 0; padding: 0; }
.ic { width: 16px; height: 16px; overflow: visible; }

/* title bar */
.titlebar { display: flex; justify-content: space-between; height: 17px; background: #fff; overflow: hidden; position: relative; flex: none; }
.quick { display: flex; align-items: center; height: 16px; margin-top: -3px; }
.applogo { width: 16px; height: 16px; margin-left: -6px; }
.tsep { width: 1px; height: 16px; background: #a0a0a0; margin: 0 5px 0 8px; }
.qbtn { width: 24px; height: 16px; padding: 0 4px; }
.qbtn svg { width: 16px; height: 16px; }
.caret { width: 5px; height: 4px; margin: 2px 0 0 3px; }
.apptitle { position: absolute; left: 0; right: 0; top: -5px; padding-left: 337px; text-align: center; line-height: 16px; font-size: 12px; }
.winctl { display: flex; gap: 36px; margin-right: 20px; }
.winctl svg { width: 10px; height: 10px; margin-top: -2px; }

/* menu bar */
.menubar { display: flex; height: 24px; margin-right: 3px; background: #ecedee; font-size: 12px; flex: none; }
.file { width: 53px; height: 23px; background: #3590cf; color: #fff; }
.menu.active { background: #fafbff; color: #3590cf; }
.help { margin: 3px 3px 0 auto; width: 16px; height: 16px; line-height: 16px; background: #3590cf; color: #fff; font-size: 13px; }

/* ribbon */
.ribbon { display: flex; height: 91px; margin-right: 3px; border: solid #d2d4d8; border-width: 0 1px 1px 0; flex: none; }
.group { display: flex; flex-direction: column; flex: none; }
.gbody { display: flex; justify-content: center; padding-top: 3px; height: 72px; }
.big { height: 66px; padding: 3px 0 0; border: 1px solid transparent; display: flex; flex-direction: column; align-items: center; line-height: 13px; flex: none; }
.big.active { background: #9dcff8; border-color: #1e90f0; }
.bigicon { width: 32px; height: 32px; margin-bottom: 1px; }
.l2 { display: flex; align-items: center; height: 13px; }
.mini { width: 5px; height: 3px; margin: 1px 0 0 5px; }
.mini.lone { margin-left: 0; }
.off { color: #a8a8aa; }
.list { display: flex; flex-direction: column; margin-top: -2px; padding-left: 3px; }
.small { display: flex; align-items: center; height: 22px; gap: 2px; }
.small .mini { margin-left: 3px; }
.glabel { text-align: center; color: #6e6e70; line-height: 16px; }
.gsep { width: 1px; height: 75px; margin-top: 8px; background: #d2d4d8; }

/* panels */
.work { flex: 1; min-height: 0; display: flex; gap: 5px; padding: 4px 3px 0 0; }
.panel { border: 1px solid #d2d4d8; display: flex; flex-direction: column; min-width: 0; min-height: 0; }
.builder { width: 346px; border-left: 0; flex: none; }
.settings { width: 343px; border-color: #9ccff5; flex: none; }
.right { flex: 1; min-width: 0; display: flex; flex-direction: column; gap: 5px; }
.upper { flex: 1; min-height: 0; display: flex; gap: 5px; }
.graphics { flex: 1; }
.addplot { width: 143px; flex: none; }
.messages { height: 167px; flex: none; }
.head { display: flex; height: 32px; padding: 4px 4px 0 7px; gap: 6px; flex: none; }
.builder .head { padding-left: 5px; }
.head h2 { flex: 1; font-size: 19px; line-height: 30px; font-weight: 300; color: #2f559c; }
.hcaret { width: 9px; height: 5px; margin-top: 11px; color: #55565a; }
.pin { width: 8px; height: 11px; margin-top: 9px; color: #55565a; }
.tools { display: flex; align-items: center; height: 20px; padding-left: 3px; flex: none; }
.builder .tools { padding-left: 1px; }
.tbtn { width: 23px; display: flex; justify-content: center; }
.tbtn svg { width: 16px; height: 16px; }
.tcaret { width: 12px; margin-right: 5px; display: flex; justify-content: center; }
.tcaret svg { width: 7px; height: 4px; }
.vsep { width: 1px; height: 16px; margin: 0 4px; background: #c9cbd0; }

/* model tree */
.tree { list-style: none; flex: 1; margin: 2px 4px 8px 2px; border: 1px solid #d2d4d8; background: #fff; }
.tree li { display: flex; align-items: center; height: 18px; white-space: nowrap; }
.tree .sel { background: #dadadc; }
.lv0 { padding-left: 4px; }
.lv1 { padding-left: 24px; }
.lv2 { padding-left: 44px; }
.lv3 { padding-left: 64px; }
.twist { width: 11px; height: 9px; padding-left: 1px; margin-right: 5px; }
.twist svg { height: 7px; }
.lv3 .twist svg { height: 9px; }
.name { margin-left: 6px; }
.tree i { margin-left: 6px; color: #1c1c1c; }

/* settings */
.settings h2, .settings .sub { color: #1e90f0; }
.settings .head svg { color: #3590cf; }
.sub { height: 37px; padding-left: 6px; line-height: 26px; font-size: 13px; font-weight: 300; }
.settings h3 { display: flex; align-items: center; height: 26px; padding-left: 5px; background: #dfe9f5; font-size: 12px; font-weight: 400; }
.settings h3 svg { width: 9px; height: 5px; margin-right: 12px; color: #3c3c3c; }
.checks { padding: 6px 0 10px 6px; }
.checks label { display: flex; align-items: center; height: 19px; }
.checks label + label { margin-top: 2px; }
.checks input { appearance: none; width: 14px; height: 13px; margin: 0 5px 0 0; border: 1px solid #77787a; background: #f0f0f0; }
.field { display: flex; align-items: center; margin: 9px 5px 0; }
.field label { width: 87px; }
.combo { flex: 1; position: relative; }
.combo select { appearance: none; display: block; width: 100%; height: 21px; padding: 0 12px; font: inherit; color: #000; border: 1px solid #d2d4d8; border-radius: 2px; background: #ececec; }
.combo svg { position: absolute; right: 7px; top: 9px; width: 7px; height: 4px; }

/* graphics view */
.graphics { background: #fafbff; }
.topruler { width: 100%; height: 5px; margin-top: 3px; }
.scene { flex: 1; min-height: 0; position: relative; background: #fff; }
.model { width: 100%; height: 100%; }
.badge { position: absolute; right: 5px; top: 4px; width: 20px; height: 20px; }
.ruler { width: 100%; height: 24px; background: #fff; }
.model text, .ruler text { font-family: "DejaVu Sans", sans-serif; font-size: 12px; }
.model text { font-size: 11px; }

/* tabs */
.tabs { display: flex; padding: 5px 4px 0; height: 29px; border-bottom: 1px solid #d2d4d8; flex: none; }
.tab { display: flex; align-items: center; height: 23px; padding: 0 4px; margin-left: 8px; background: #ebebeb; font-size: 12px; }
.tab svg { width: 10px; height: 10px; color: #c4cad4; }
.tab.on { height: 24px; margin-left: 0; background: #fafbff; color: #2f559c; border: 1px solid #d2d4d8; border-bottom: 0; }
.messages .tabs { padding-top: 6px; height: 30px; }
.tabs .hcaret { margin: 10px 6px 0 auto; }
.tabs .pin { margin-top: 8px; }
.addplot .tab { width: 61px; justify-content: space-between; padding-right: 7px; }
.addplot .tab.on { width: 55px; }
.addplot .pin { margin-left: 2px; }
.messages .tab { width: 60px; justify-content: center; }
.messages .tab.on { width: 89px; justify-content: space-between; padding-right: 7px; }
.messages .tab:nth-child(3) { width: 30px; }

/* add plot */
.plus { display: flex; align-items: center; gap: 6px; height: 29px; padding-left: 5px; }
.plus svg { width: 13px; height: 13px; }
.search { display: flex; gap: 8px; padding: 0 3px 0 5px; }
.search input { flex: 1; min-width: 0; height: 18px; margin-top: 1px; padding: 0 2px; border: 1px solid #d2d4d8; border-right: 0; background: #fff; }
.search button { width: 61px; height: 19px; border: 1px solid #d2d4d8; border-radius: 2px; background: #ececec; }
.plots { flex: 1; margin: 7px 5px 8px; border: 1px solid #d2d4d8; border-right: 0; background: #fff; }

/* messages */
.mtools { display: flex; align-items: center; gap: 4px; height: 27px; padding-left: 8px; flex: none; }
.msgbtn { width: 20px; height: 20px; background: #9dcff8; border: 1px solid #1e90f0; border-radius: 2px; }
.msgbtn svg { width: 18px; height: 18px; }
.log { flex: 1; margin: 0 4px 5px; border: 1px solid #d2d4d8; padding: 0 2px; line-height: 15px; }

.status { height: 26px; padding: 11px 0 0 1011px; line-height: 15px; flex: none; }
</style>
